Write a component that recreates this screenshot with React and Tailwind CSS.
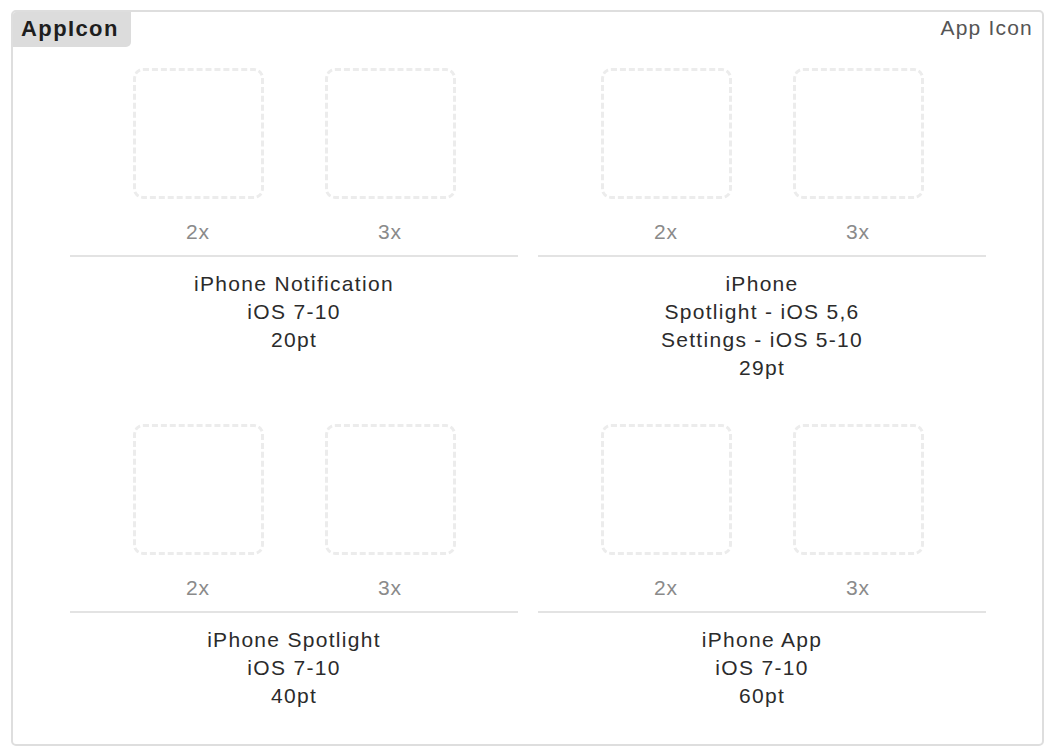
import React from 'react';

const groups = [
  { id: 'notification', lines: ['iPhone Notification', 'iOS 7-10', '20pt'] },
  { id: 'settings', lines: ['iPhone', 'Spotlight - iOS 5,6', 'Settings - iOS 5-10', '29pt'] },
  { id: 'spotlight', lines: ['iPhone Spotlight', 'iOS 7-10', '40pt'] },
  { id: 'app', lines: ['iPhone App', 'iOS 7-10', '60pt'] },
];

const Slot = ({ scale }) => (
  <div className="flex flex-col items-center">
    <div className="w-[131px] h-[131px] rounded-[10px] border-[3px] border-dashed border-[#ececec]" />
    <div className="mt-[19px] h-[28px] leading-[28px] text-[21px] tracking-[1px] text-[#8a8a8a]">{scale}</div>
  </div>
);

const App = () => {
  return (
    <div className="w-[1058px] h-[756px] bg-white pt-[10px] pl-[11px]" style={{ fontFamily: '"Liberation Sans", Arial, sans-serif' }}>
      <div className="w-[1033px] h-[736px] border-2 border-[#dedede] rounded-[5px] flex flex-col">
        <div className="flex justify-between items-start h-[35px]">
          <div className="bg-[#dcdcdc] rounded-tl-[3px] rounded-br-[5px] h-[35px] w-[118px] pl-[8px] pb-[3px] flex items-center text-[22px] tracking-[1.4px] font-bold text-[#1e1e1e]">
            AppIcon
          </div>
          <div className="pr-[9px] pb-[3px] h-[35px] flex items-center text-[21px] tracking-[1.2px] text-[#555]">App Icon</div>
        </div>
        <div className="grid grid-cols-[448px_448px] gap-x-[20px] pl-[57px] pt-[21px]">
          {groups.map((g) => (
            <div key={g.id} className="h-[356px] flex flex-col">
              <div className="flex justify-center gap-[61px]">
                <Slot scale="2x" />
                <Slot scale="3x" />
              </div>
              <div className="mt-[9px] h-[2px] bg-[#e3e3e3]" />
              <div className="mt-[13px] flex flex-col items-center text-[21px] tracking-[1.3px] leading-[28px] text-[#2b2b2b]">
                {g.lines.map((l) => (
                  <div key={l}>{l}</div>
                ))}
              </div>
            </div>
          ))}
        </div>
      </div>
    </div>
  );
};

export default App;
